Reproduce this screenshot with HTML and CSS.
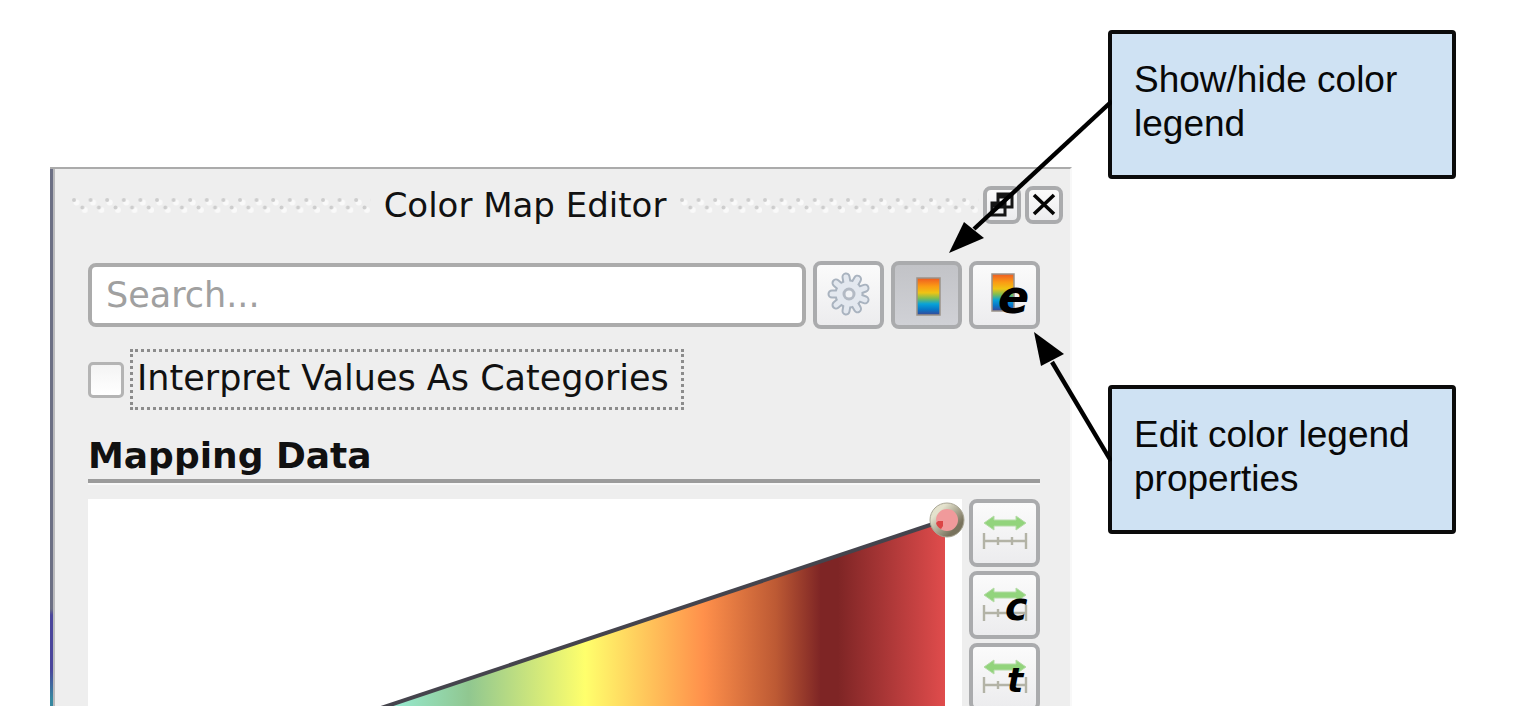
FILE: index.html
```html
<!DOCTYPE html>
<html lang="en">
<head>
<meta charset="utf-8">
<title>Color Map Editor</title>
<link rel="stylesheet" href="styles.css">
</head>
<body>
<svg class="defs" aria-hidden="true">
  <defs>
    <linearGradient id="rainbow" x1="0" y1="0" x2="0" y2="1">
      <stop offset="0" stop-color="#ee5a22"/>
      <stop offset=".22" stop-color="#fb9a14"/>
      <stop offset=".4" stop-color="#efc414"/>
      <stop offset=".55" stop-color="#7fbd52"/>
      <stop offset=".7" stop-color="#08a3d8"/>
      <stop offset=".85" stop-color="#0877c8"/>
      <stop offset="1" stop-color="#3a4796"/>
    </linearGradient>
    <pattern id="grip" width="16.6" height="20" patternUnits="userSpaceOnUse">
      <circle cx="5.5" cy="7.5" r="3" fill="#f9f9f9"/>
      <circle cx="13.8" cy="15" r="3" fill="#f9f9f9"/>
      <circle cx="3" cy="5" r="2" fill="#cdcdcd"/>
      <circle cx="11.3" cy="12.5" r="2" fill="#cdcdcd"/>
    </pattern>
    <path id="teeth" d="M0 0-3-17M0 0 8.500-14.800M0 0 16-5.800M0 0 16 5.800M0 0 8.500 14.800M0 0-3 17M0 0-13 11M0 0H-17M0 0-13-11"/>
    <symbol id="range" viewBox="0 0 46 46">
      <path d="M2 13 12 6v4h22V6l10 7-10 7v-4H12v4z" fill="#92d47c" stroke="#b4dba6" stroke-width="1"/>
      <path d="M2 31h42M2 23v16M44 23v16M16 27v8M30 27v8" fill="none" stroke="#b3b3a6" stroke-width="2.4"/>
    </symbol>
  </defs>
</svg>

<main class="figure">
  <section class="panel">
    <header class="titlebar">
      <svg class="grip" aria-hidden="true"><rect width="100%" height="20" fill="url(#grip)"/></svg>
      <h1 class="title">Color Map Editor</h1>
      <svg class="grip" aria-hidden="true"><rect width="100%" height="20" fill="url(#grip)"/></svg>
      <div class="window-buttons">
        <button class="button window-button" type="button" aria-label="Float panel">
          <svg width="30" height="30" viewBox="0 0 30 30"><path d="M11 4h14v13H11zM11 7h14M5 13h13v12H5zM5 16h13" fill="none" stroke="#151515" stroke-width="3"/></svg>
        </button>
        <button class="button window-button" type="button" aria-label="Close panel">
          <svg width="30" height="30" viewBox="0 0 30 30"><path d="M5 5 25 24M25 5 5 24" fill="none" stroke="#050505" stroke-width="3.6"/></svg>
        </button>
      </div>
    </header>

    <div class="content">
      <div class="search-row">
        <input class="search" type="text" placeholder="Search..." aria-label="Search">
        <button class="button tool" type="button" aria-label="Advanced properties">
          <svg width="48" height="48" viewBox="-24 -23 48 48">
            <g stroke-linecap="round">
              <use href="#teeth" stroke="#a9b3bf" stroke-width="9"/>
              <circle r="14.500" fill="#a9b3bf"/>
              <use href="#teeth" stroke="#e3e8ef" stroke-width="5"/>
              <circle r="12.500" fill="#e3e8ef"/>
            </g>
            <circle r="5" fill="#f0f2f5" stroke="#b3bac4" stroke-width="3"/>
          </svg>
        </button>
        <button class="button tool pressed" type="button" aria-pressed="true" aria-label="Show/hide color legend">
          <svg width="48" height="48" viewBox="0 0 48 48"><rect x="14" y="7" width="23" height="37" fill="url(#rainbow)" stroke="#9b9289" stroke-width="1.5"/></svg>
        </button>
        <button class="button tool" type="button" aria-label="Edit color legend properties">
          <svg width="48" height="48" viewBox="0 0 48 48"><rect x="11" y="3" width="22" height="37" fill="url(#rainbow)" stroke="#9b9289" stroke-width="1.5"/><text class="glyph" x="17" y="42" font-size="46">e</text></svg>
        </button>
      </div>

      <div class="check-row">
        <input class="checkbox" type="checkbox" id="categories">
        <label class="check-label" for="categories">Interpret Values As Categories</label>
      </div>

      <h2 class="section-title">Mapping Data</h2>

      <div class="mapping">
        <svg class="chart" viewBox="88 499 874 280" preserveAspectRatio="xMaxYMin slice" role="img" aria-label="Opacity transfer function">
          <defs>
            <linearGradient id="ramp" gradientUnits="userSpaceOnUse" x1="380" y1="0" x2="945" y2="0">
              <stop offset="0" stop-color="#98f0dc"/>
              <stop offset=".157" stop-color="#90c790"/>
              <stop offset=".363" stop-color="#ffff6c"/>
              <stop offset=".573" stop-color="#ff904b"/>
              <stop offset=".7" stop-color="#bd5a34"/>
              <stop offset=".78" stop-color="#7e2525"/>
              <stop offset=".81" stop-color="#7e2525"/>
              <stop offset="1" stop-color="#e04c4c"/>
            </linearGradient>
            <linearGradient id="ring" x1="0" y1="0" x2="1" y2="1">
              <stop offset=".2" stop-color="#e4e2cd"/>
              <stop offset=".8" stop-color="#79735d"/>
            </linearGradient>
          </defs>
          <path d="M168 779 945 520v259z" fill="url(#ramp)"/>
          <path d="M168 779 945 520" stroke="#45444d" stroke-width="4"/>
          <circle cx="947" cy="520" r="14" fill="#f09a9b" stroke="url(#ring)" stroke-width="6"/>
          <circle cx="947" cy="520" r="17" fill="none" stroke="#aaa796" stroke-width="1"/>
          <path d="M938 521h5v5l-2 3q-4-2-5-6z" fill="#dc4545"/>
        </svg>
        <div class="tools">
          <button class="button tool" type="button" aria-label="Rescale to data range">
            <svg width="46" height="46"><use href="#range"/></svg>
          </button>
          <button class="button tool" type="button" aria-label="Rescale to custom range">
            <svg width="46" height="46" viewBox="0 0 46 46"><use href="#range" width="46" height="46"/><text class="glyph" x="23" y="38" font-size="38">c</text></svg>
          </button>
          <button class="button tool" type="button" aria-label="Rescale to temporal range">
            <svg width="46" height="46" viewBox="0 0 46 46"><use href="#range" width="46" height="46"/><text class="glyph" x="25" y="38" font-size="34">t</text></svg>
          </button>
        </div>
      </div>
    </div>
  </section>

  <aside class="callouts">
    <div class="callout">
      Show/hide color legend
      <svg class="arrow arrow-down" viewBox="0 0 164 156" aria-hidden="true"><path d="M164 3 26 131" stroke="#000" stroke-width="4.4"/><path d="M1 155 16 124 36 140z"/></svg>
    </div>
    <div class="callout">
      Edit color legend properties
      <svg class="arrow arrow-up" viewBox="0 0 80 132" aria-hidden="true"><path d="M79 131 20 32" stroke="#000" stroke-width="4.4"/><path d="M2 2 9 36 32 24z"/></svg>
    </div>
  </aside>
</main>
</body>
</html>
```
FILE: styles.css
```css
* {
  box-sizing: border-box;
}

body {
  margin: 0;
  background: #fff;
  color: #111;
  font-family: "DejaVu Sans", sans-serif;
}

.defs {
  position: absolute;
  width: 0;
  height: 0;
}

.figure {
  display: grid;
  grid-template-columns: minmax(0, 1fr) 348px;
  column-gap: 36px;
  height: 100vh;
  padding: 0 58px 0 50px;
  overflow: hidden;
}

.panel {
  margin-top: 167px;
  padding: 16px 0 0 5px;
  border-top: 2px solid #ababab;
  border-right: 2px solid #f8f8f8;
  background:
    linear-gradient(#6c6f84 0 440px, #4a459c 446px 500px, #3688a0 530px) 0 0 / 3px 100% no-repeat,
    linear-gradient(#b9b9bb, #b9b9bb) 3px 0 / 2px 100% no-repeat,
    #eee;
  overflow: hidden;
}

.titlebar {
  display: flex;
  align-items: center;
  padding: 0 7px 0 16px;
  height: 39px;
}

.grip {
  flex: 1;
  min-width: 0;
  height: 20px;
}

.title {
  margin: 0 13px;
  font-size: 34px;
  font-weight: 400;
  line-height: 40px;
  white-space: nowrap;
}

.window-buttons {
  display: flex;
  gap: 4px;
  margin-left: 4px;
}

.button {
  display: flex;
  flex: none;
  align-items: center;
  justify-content: center;
  padding: 0;
  border: 4px solid #aaabad;
  border-radius: 8px;
  background: linear-gradient(#fbfbfb, #ececee);
}

.button svg {
  overflow: visible;
}

.window-button {
  width: 38px;
  height: 38px;
}

.tool {
  width: 71px;
  height: 68px;
}

.pressed {
  background: linear-gradient(#c2c3c7, #d0d1d6);
}

.glyph {
  font-family: "DejaVu Sans", sans-serif;
  font-style: italic;
  font-weight: 700;
}

.content {
  padding: 37px 30px 0 33px;
}

.search-row {
  display: flex;
  align-items: center;
  gap: 7px;
}

.search {
  flex: 1;
  min-width: 0;
  height: 64px;
  padding: 0 14px;
  border: 4px solid #ababab;
  border-radius: 8px;
  background: #fff;
  font: 35px "DejaVu Sans", sans-serif;
}

.search::placeholder {
  color: #a0a0a0;
  opacity: 1;
}

.check-row {
  display: flex;
  align-items: center;
  gap: 6px;
  margin-top: 20px;
}

.checkbox {
  appearance: none;
  width: 36px;
  height: 36px;
  margin: 0;
  border: 3px solid #b4b4b4;
  border-radius: 5px;
  background: linear-gradient(#f4f4f4, #fff);
}

.check-label {
  padding: 7px 12px 10px 4px;
  border: 3px dotted #8c8c8c;
  font-size: 35px;
  line-height: 38px;
  white-space: nowrap;
}

.section-title {
  margin: 26px 0 16px;
  padding-bottom: 3px;
  border-bottom: 4px solid #9b9b9b;
  box-shadow: 0 2px #f8f8f8;
  font-size: 36px;
  line-height: 40px;
}

.mapping {
  display: flex;
  align-items: flex-start;
  gap: 7px;
}

.chart {
  flex: 1;
  min-width: 0;
  height: 280px;
  background: #fff;
  overflow: visible;
}

.tools {
  display: flex;
  flex-direction: column;
  gap: 4px;
}

.callouts {
  display: flex;
  flex-direction: column;
  gap: 206px;
  padding-top: 30px;
}

.callout {
  position: relative;
  padding: 24px 22px 29px;
  border: 4px solid #0b0b0b;
  border-radius: 4px;
  background: #cfe2f3;
  color: #080808;
  font: 37px/44px "Liberation Sans", sans-serif;
}

.arrow {
  position: absolute;
  right: 100%;
}

.arrow-down {
  top: 64px;
  width: 164px;
  height: 156px;
}

.arrow-up {
  bottom: 68px;
  width: 80px;
  height: 132px;
}
```
